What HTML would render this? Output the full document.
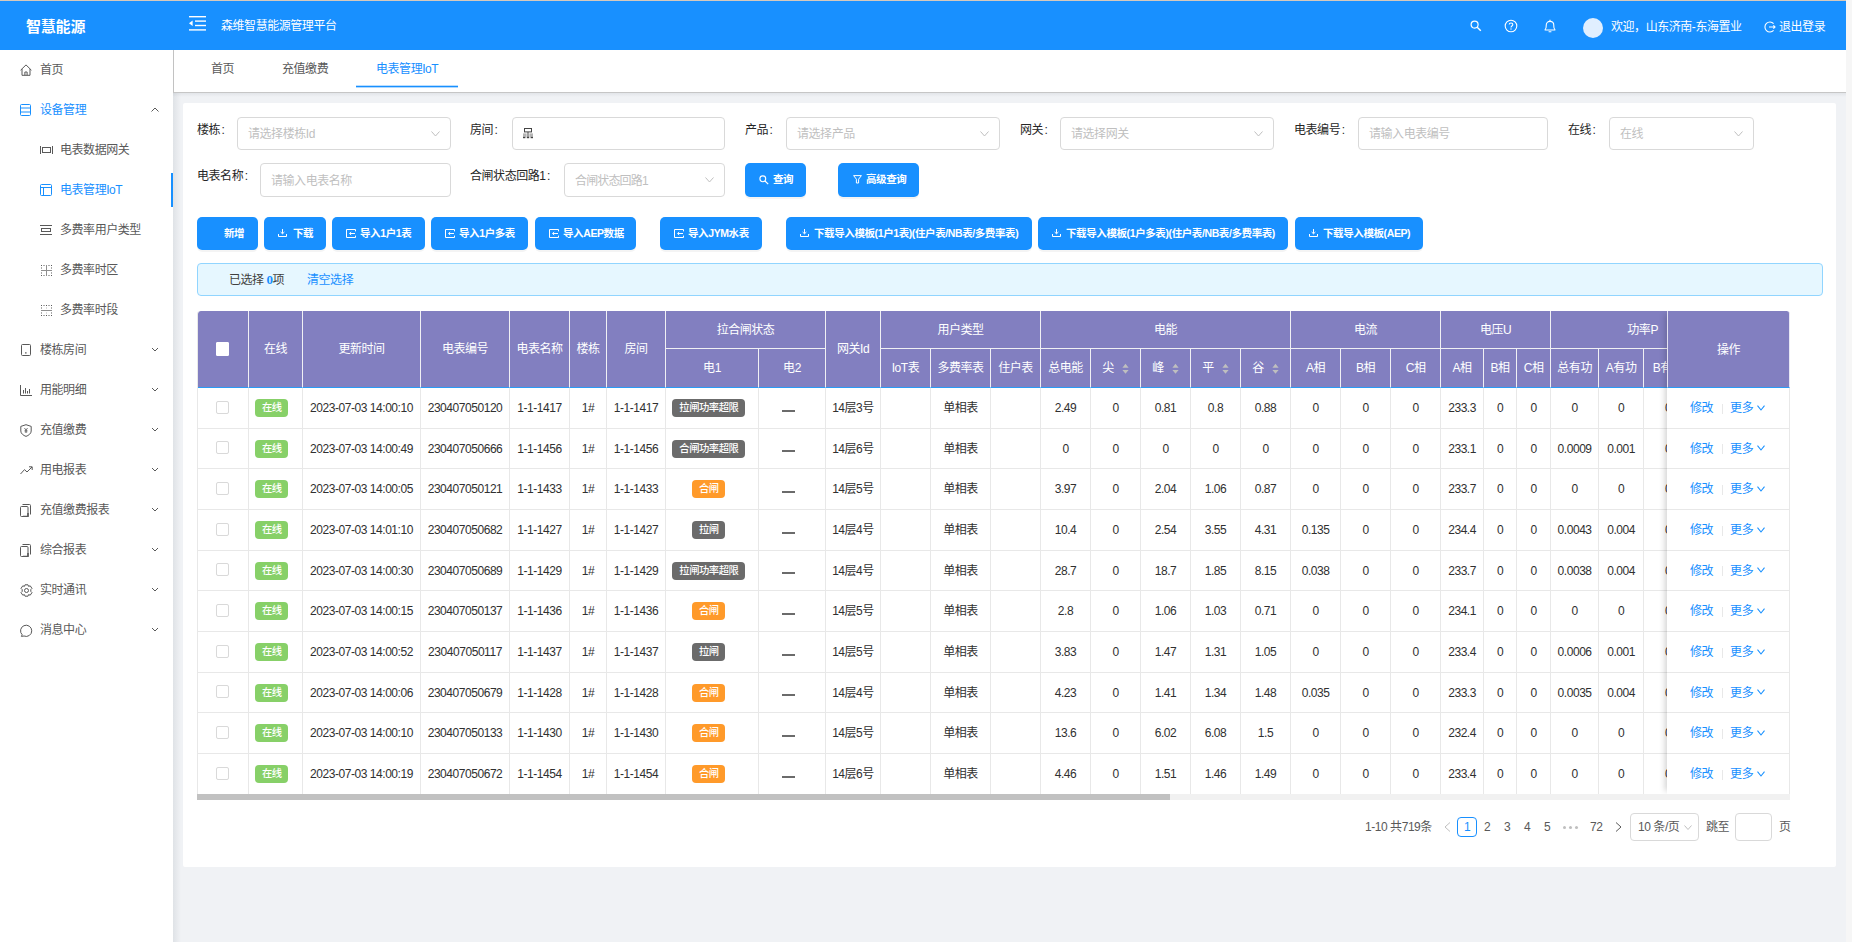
<!DOCTYPE html>
<html lang="zh-CN"><head><meta charset="utf-8"><title>森维智慧能源管理平台</title>
<style>
*{box-sizing:border-box;margin:0;padding:0}
html,body{width:1852px;height:942px;overflow:hidden}
body{position:relative;background:#f0f2f5;font-family:"Liberation Sans","Noto Sans CJK SC",sans-serif;font-size:12px;letter-spacing:-0.45px;color:#555;line-height:1}
.abs{position:absolute}
.t{position:absolute;white-space:nowrap;line-height:16px;height:16px}
#hdr{position:absolute;left:0;top:0;width:1846px;height:50px;background:#1890ff;border-top:1px solid #d5c9bd;color:#fff}
#sbar{position:absolute;left:1846px;top:0;width:6px;height:942px;background:#f6f6f6}
#side{position:absolute;left:0;top:50px;width:173px;height:892px;background:#fff}
#tabs{position:absolute;left:173px;top:50px;width:1673px;height:43px;background:#fff;border-left:1px solid #c2c2c2;border-bottom:1px solid #c6c6c6}
#card{position:absolute;left:183px;top:103px;width:1653px;height:764px;background:#fff;border-radius:2px}
.mi{position:absolute;left:0;width:173px;height:40px;color:#595959}
.mi .t{top:12px}
.mi svg{position:absolute}
.mi.on{color:#1890ff}
.lbl{position:absolute;white-space:nowrap;line-height:16px;color:#262626}
.inp{position:absolute;border:1px solid #d9d9d9;border-radius:4px;background:#fff;height:33px}
.inp .ph{position:absolute;left:10px;top:7.5px;line-height:16px;color:#bfbfbf;white-space:nowrap}
.inp svg{position:absolute}
.btn{position:absolute;height:33px;border-radius:5px;background:#1890ff;color:#fff;font-weight:bold;box-shadow:0 2px 0 rgba(0,0,0,.045);white-space:nowrap;font-size:10.5px;letter-spacing:-0.4px}
.btn .t{top:8px}
.btn svg{position:absolute}
#alert{position:absolute;left:197px;top:263px;width:1626px;height:33px;background:#e6f7ff;border:1px solid #91d5ff;border-radius:4px;color:#404040}
#twrap{position:absolute;left:197px;top:311px;width:1593px;height:483px;overflow:hidden;border-left:1px solid #e8e8e8;border-radius:3px 3px 0 0}
table{border-collapse:separate;border-spacing:0;table-layout:fixed;position:absolute;left:0;top:0}
th,td{border-right:1px solid #e8e8e8;border-bottom:1px solid #e8e8e8;text-align:center;font-weight:normal;white-space:nowrap;overflow:hidden;padding:0;vertical-align:middle;color:#303030}
th{background:#827fc0;color:#fff;border-right:1px solid #f0f0f4;border-bottom:1px solid #f0f0f4}
tr.h2 th,th.rs{border-bottom:1px solid #2a9bf5}
td{background:#fff}
.tag{display:inline-block;height:18px;line-height:18px;border-radius:4px;color:#fff;font-size:10.3px;letter-spacing:-0.45px;padding:0 6.3px 0 7px;vertical-align:middle;margin-right:7px;font-weight:500}
.ds{display:inline-block;width:13px;height:2px;background:#6b6b6b;vertical-align:middle;position:relative;top:2px;margin-right:7px}
.dv{display:inline-block;width:1px;height:10px;background:#e8e8e8;vertical-align:middle;margin:0 7px 0 9px}
.dn{vertical-align:middle;margin-left:4px;position:relative;top:-1px}
#fix td{text-align:left;padding-left:23px}
.g{background:#87d068;margin-right:8px}.k{background:#6b6b6b}.o{background:#ff9a2a}
.cb{display:inline-block;width:13px;height:13px;border:1px solid #d9d9d9;border-radius:2px;background:#fff;vertical-align:middle;position:relative;left:-1px;top:-1px}
.srt{display:inline-block;vertical-align:middle;margin-left:8px}
#fix{position:absolute;left:1469px;top:0;width:123px;height:483px;box-shadow:-5px 0 6px -3px rgba(0,0,0,.18);background:#fff}
#fix table{left:0}
a{color:#1890ff;text-decoration:none}
.pg{position:absolute;white-space:nowrap;line-height:16px;color:#595959}
</style></head>
<body>
<div id="hdr">
<div class="t" style="left:26px;top:17px;font-size:15px;font-weight:bold;letter-spacing:-0.2px;line-height:18px;height:18px">智慧能源</div>
<svg class="abs" style="left:189px;top:15px" width="17" height="15" viewBox="0 0 17 15"><g fill="#fff"><rect x="0" y="0" width="17" height="1.4"/><rect x="6" y="4.4" width="11" height="1.4"/><rect x="6" y="8.8" width="11" height="1.4"/><rect x="0" y="13.2" width="17" height="1.4"/><path d="M0 7.3 L3.6 4.6 L3.6 10 Z"/></g></svg>
<div class="t" style="left:221px;top:17px">森维智慧能源管理平台</div>
<svg class="abs" style="left:1470px;top:19px" width="12" height="12" viewBox="0 0 12 12"><circle cx="4.6" cy="4.6" r="3.5" fill="none" stroke="#fff" stroke-width="1.2"/><path d="M7.2 7.2 L10.8 10.8" stroke="#fff" stroke-width="1.4"/></svg>
<svg class="abs" style="left:1504px;top:18px" width="14" height="14" viewBox="0 0 14 14"><circle cx="7" cy="7" r="5.8" fill="none" stroke="#fff" stroke-width="1.1"/><path d="M5.2 5.6 C5.2 3.4 8.8 3.4 8.8 5.6 C8.8 7 7 7 7 8.4" fill="none" stroke="#fff" stroke-width="1.1"/><rect x="6.4" y="9.4" width="1.2" height="1.2" fill="#fff"/></svg>
<svg class="abs" style="left:1543px;top:18px" width="14" height="15" viewBox="0 0 14 15"><path d="M2.2 11 L2.2 10.4 C3.4 9.6 3.2 8 3.2 6.4 C3.2 3.6 5 2.4 7 2.4 C9 2.4 10.8 3.6 10.8 6.4 C10.8 8 10.6 9.6 11.8 10.4 L11.8 11 Z" fill="none" stroke="#fff" stroke-width="1.1"/><path d="M7 0.8 L7 2.4 M5.6 12.8 L8.4 12.8" stroke="#fff" stroke-width="1.1"/></svg>
<div class="abs" style="left:1583px;top:17px;width:20px;height:20px;border-radius:10px;background:#e0efff"></div>
<div class="t" style="left:1611px;top:18px">欢迎，山东济南-东海置业</div>
<svg class="abs" style="left:1764px;top:20px" width="12" height="12" viewBox="0 0 12 12"><path d="M9.6 2.6 A5 5 0 1 0 9.6 9.4" fill="none" stroke="#fff" stroke-width="1.1"/><path d="M5 6 L11 6 M9.4 4.4 L11 6 L9.4 7.6" fill="none" stroke="#fff" stroke-width="1.1"/></svg>
<div class="t" style="left:1779px;top:18px">退出登录</div>
</div>
<div id="sbar"></div>
<div id="side">
<div class="mi" style="top:0px"><svg style="left:20px;top:14px" width="12" height="12" viewBox="0 0 12 12"><path d="M0.6 6.2 L6 0.9 L11.4 6.2 M2 5 L2 11.3 L10 11.3 L10 5 M4.9 11.3 L4.9 8 L7.1 8 L7.1 11.3" fill="none" stroke="#595959" stroke-width="1"/></svg><div class="t" style="left:40px">首页</div></div>
<div class="mi on" style="top:40px"><svg style="left:20px;top:14px" width="11" height="12" viewBox="0 0 11 12"><rect x="0.5" y="0.5" width="10" height="11" rx="1" fill="none" stroke="#1890ff" stroke-width="1"/><path d="M0.5 4 L10.5 4 M0.5 8 L10.5 8" stroke="#1890ff" stroke-width="1"/></svg><div class="t" style="left:40px">设备管理</div><svg style="left:151px;top:17px" width="8" height="6" viewBox="0 0 8 6"><path d="M0.5 4.5 L4 1 L7.5 4.5" fill="none" stroke="#595959" stroke-width="1"/></svg></div>
<div class="mi" style="top:80px"><svg style="left:40px;top:16px" width="13" height="8" viewBox="0 0 13 8"><path d="M0.5 0 L0.5 8 M12.5 0 L12.5 8" stroke="#595959" stroke-width="1"/><rect x="2.5" y="1.5" width="8" height="5" fill="none" stroke="#595959" stroke-width="1"/></svg><div class="t" style="left:60px">电表数据网关</div></div>
<div class="mi on" style="top:120px"><svg style="left:40px;top:14px" width="12" height="12" viewBox="0 0 12 12"><rect x="0.5" y="0.5" width="11" height="11" rx="1" fill="none" stroke="#1890ff" stroke-width="1"/><path d="M0.5 3.5 L11.5 3.5 M3.5 3.5 L3.5 11.5" stroke="#1890ff" stroke-width="1"/></svg><div class="t" style="left:60px">电表管理IoT</div></div>
<div class="mi" style="top:160px"><svg style="left:40px;top:15px" width="12" height="10" viewBox="0 0 12 10"><path d="M0 0.5 L12 0.5 M0 9.5 L12 9.5" stroke="#595959" stroke-width="1"/><rect x="1.5" y="3.5" width="9" height="3" fill="none" stroke="#595959" stroke-width="1"/></svg><div class="t" style="left:60px">多费率用户类型</div></div>
<div class="mi" style="top:200px"><svg style="left:41px;top:15px" width="11" height="11" viewBox="0 0 11 11"><g fill="#595959"><rect x="0" y="0" width="1" height="1"/><rect x="0" y="10" width="1" height="1"/><rect x="2.5" y="0" width="1" height="1"/><rect x="2.5" y="10" width="1" height="1"/><rect x="5" y="0" width="1" height="1"/><rect x="5" y="10" width="1" height="1"/><rect x="7.5" y="0" width="1" height="1"/><rect x="7.5" y="10" width="1" height="1"/><rect x="10" y="0" width="1" height="1"/><rect x="10" y="10" width="1" height="1"/><rect x="0" y="2.5" width="1" height="1"/><rect x="0" y="5" width="1" height="1"/><rect x="0" y="7.5" width="1" height="1"/><rect x="10" y="2.5" width="1" height="1"/><rect x="10" y="5" width="1" height="1"/><rect x="10" y="7.5" width="1" height="1"/></g><path d="M0 5.5 L11 5.5 M5.5 0 L5.5 11" stroke="#8f8f8f" stroke-width="1"/></svg><div class="t" style="left:60px">多费率时区</div></div>
<div class="mi" style="top:240px"><svg style="left:41px;top:15px" width="11" height="11" viewBox="0 0 11 11"><g fill="#595959"><rect x="0" y="0" width="1" height="1"/><rect x="0" y="10" width="1" height="1"/><rect x="2.5" y="0" width="1" height="1"/><rect x="2.5" y="10" width="1" height="1"/><rect x="5" y="0" width="1" height="1"/><rect x="5" y="10" width="1" height="1"/><rect x="7.5" y="0" width="1" height="1"/><rect x="7.5" y="10" width="1" height="1"/><rect x="10" y="0" width="1" height="1"/><rect x="10" y="10" width="1" height="1"/><rect x="0" y="2.5" width="1" height="1"/><rect x="0" y="5" width="1" height="1"/><rect x="0" y="7.5" width="1" height="1"/><rect x="10" y="2.5" width="1" height="1"/><rect x="10" y="5" width="1" height="1"/><rect x="10" y="7.5" width="1" height="1"/></g><path d="M0 5.5 L11 5.5" stroke="#8f8f8f" stroke-width="1"/><rect x="5" y="2.5" width="1" height="1" fill="#bbb"/><rect x="5" y="7.5" width="1" height="1" fill="#bbb"/></svg><div class="t" style="left:60px">多费率时段</div></div>
<div class="mi" style="top:280px"><svg style="left:21px;top:14px" width="10" height="12" viewBox="0 0 10 12"><rect x="0.5" y="0.5" width="9" height="11" rx="1" fill="none" stroke="#595959" stroke-width="1"/><rect x="4" y="8.3" width="1.6" height="1.2" fill="#595959"/></svg><div class="t" style="left:40px">楼栋房间</div><svg style="left:151px;top:17px" width="8" height="6" viewBox="0 0 8 6"><path d="M1 1 L4 4 L7 1" fill="none" stroke="#595959" stroke-width="1"/></svg></div>
<div class="mi" style="top:320px"><svg style="left:20px;top:15px" width="12" height="11" viewBox="0 0 12 11"><path d="M0.5 0 L0.5 10.5 L12 10.5 M3.5 5 L3.5 8.5 M5.5 3 L5.5 8.5 M7.5 6 L7.5 8.5 M9.5 4 L9.5 8.5" fill="none" stroke="#595959" stroke-width="1"/></svg><div class="t" style="left:40px">用能明细</div><svg style="left:151px;top:17px" width="8" height="6" viewBox="0 0 8 6"><path d="M1 1 L4 4 L7 1" fill="none" stroke="#595959" stroke-width="1"/></svg></div>
<div class="mi" style="top:360px"><svg style="left:20px;top:14px" width="12" height="13" viewBox="0 0 12 13"><path d="M6 0.7 L11.2 2.4 L11.2 7 C11.2 9.6 8.6 11.4 6 12.4 C3.4 11.4 0.8 9.6 0.8 7 L0.8 2.4 Z" fill="none" stroke="#595959" stroke-width="1"/><path d="M4.4 4 L6 6 L7.6 4 M6 6 L6 9 M4.6 6.4 L7.4 6.4 M4.6 7.8 L7.4 7.8" fill="none" stroke="#595959" stroke-width=".8"/></svg><div class="t" style="left:40px">充值缴费</div><svg style="left:151px;top:17px" width="8" height="6" viewBox="0 0 8 6"><path d="M1 1 L4 4 L7 1" fill="none" stroke="#595959" stroke-width="1"/></svg></div>
<div class="mi" style="top:400px"><svg style="left:20px;top:16px" width="13" height="9" viewBox="0 0 13 9"><path d="M0.5 8 L4.5 3.6 L7 6 L12 1 M9 0.8 L12.2 0.8 L12.2 4" fill="none" stroke="#595959" stroke-width="1"/></svg><div class="t" style="left:40px">用电报表</div><svg style="left:151px;top:17px" width="8" height="6" viewBox="0 0 8 6"><path d="M1 1 L4 4 L7 1" fill="none" stroke="#595959" stroke-width="1"/></svg></div>
<div class="mi" style="top:440px"><svg style="left:20px;top:14px" width="11" height="13" viewBox="0 0 11 13"><rect x="0.5" y="2.5" width="7.5" height="10" rx="1" fill="none" stroke="#595959" stroke-width="1"/><path d="M2.5 0.5 L9.5 0.5 Q10.5 0.5 10.5 1.5 L10.5 10.5" fill="none" stroke="#595959" stroke-width="1"/><path d="M3 12.5 L8 12.5 L8 9" stroke="#595959" stroke-width="1.6" fill="none"/></svg><div class="t" style="left:40px">充值缴费报表</div><svg style="left:151px;top:17px" width="8" height="6" viewBox="0 0 8 6"><path d="M1 1 L4 4 L7 1" fill="none" stroke="#595959" stroke-width="1"/></svg></div>
<div class="mi" style="top:480px"><svg style="left:20px;top:14px" width="11" height="13" viewBox="0 0 11 13"><rect x="0.5" y="2.5" width="7.5" height="10" rx="1" fill="none" stroke="#595959" stroke-width="1"/><path d="M2.5 0.5 L9.5 0.5 Q10.5 0.5 10.5 1.5 L10.5 10.5" fill="none" stroke="#595959" stroke-width="1"/><path d="M3 12.5 L8 12.5 L8 9" stroke="#595959" stroke-width="1.6" fill="none"/></svg><div class="t" style="left:40px">综合报表</div><svg style="left:151px;top:17px" width="8" height="6" viewBox="0 0 8 6"><path d="M1 1 L4 4 L7 1" fill="none" stroke="#595959" stroke-width="1"/></svg></div>
<div class="mi" style="top:520px"><svg style="left:20px;top:14px" width="13" height="13" viewBox="0 0 13 13"><path d="M5 0.8 L8 0.8 L8.6 2.4 L10.2 1.8 L12 4.4 L10.8 5.6 L10.8 7.4 L12 8.6 L10.2 11.2 L8.6 10.6 L8 12.2 L5 12.2 L4.4 10.6 L2.8 11.2 L1 8.6 L2.2 7.4 L2.2 5.6 L1 4.4 L2.8 1.8 L4.4 2.4 Z" fill="none" stroke="#595959" stroke-width="1" stroke-linejoin="round"/><circle cx="6.5" cy="6.5" r="2" fill="none" stroke="#595959" stroke-width="1"/></svg><div class="t" style="left:40px">实时通讯</div><svg style="left:151px;top:17px" width="8" height="6" viewBox="0 0 8 6"><path d="M1 1 L4 4 L7 1" fill="none" stroke="#595959" stroke-width="1"/></svg></div>
<div class="mi" style="top:560px"><svg style="left:20px;top:14px" width="13" height="13" viewBox="0 0 13 13"><path d="M2.2 10.8 A5.6 5.6 0 1 1 4 12 L1.4 12.4 Z" fill="none" stroke="#595959" stroke-width="1" stroke-linejoin="round"/></svg><div class="t" style="left:40px">消息中心</div><svg style="left:151px;top:17px" width="8" height="6" viewBox="0 0 8 6"><path d="M1 1 L4 4 L7 1" fill="none" stroke="#595959" stroke-width="1"/></svg></div>
<div class="abs" style="left:171px;top:123px;width:2px;height:34px;background:#1890ff"></div>
</div>
<div id="tabs">
<div class="t" style="left:37px;top:11px;color:#595959">首页</div>
<div class="t" style="left:108px;top:11px;color:#595959">充值缴费</div>
<div class="t" style="left:202px;top:11px;color:#1890ff">电表管理IoT</div>
<div class="abs" style="left:182px;top:36px;width:102px;height:1px;background:#1890ff;box-shadow:0 1px 0 rgba(24,144,255,.35),0 -1px 0 rgba(24,144,255,.3)"></div>
</div>
<div class="abs" style="left:173px;top:93px;width:8px;height:849px;background:linear-gradient(to right,rgba(0,21,41,.07),rgba(0,21,41,0))"></div>
<div class="abs" style="left:173px;top:93px;width:1673px;height:4px;background:linear-gradient(to bottom,rgba(0,21,41,.06),rgba(0,21,41,0))"></div>
<div id="card"></div>
<div class="lbl" style="left:197px;top:122px">楼栋<span style="margin-left:1.5px">:</span></div>
<div class="inp" style="left:237px;top:117px;width:214px;height:33px"><div class="ph">请选择楼栋Id</div><svg style="right:10px;top:13px" width="9" height="6" viewBox="0 0 9 6"><path d="M0.5 0.5 L4.5 5 L8.5 0.5" fill="none" stroke="#bfbfbf" stroke-width="1"/></svg></div>
<div class="lbl" style="left:470px;top:122px">房间<span style="margin-left:1.5px">:</span></div>
<div class="inp" style="left:512px;top:117px;width:213px;height:33px"><svg style="left:9px;top:10px" width="12" height="11" viewBox="0 0 12 11"><rect x="2.5" y="0.5" width="7" height="3.4" fill="none" stroke="#444" stroke-width="1"/><rect x="5.5" y="4" width="1" height="5.6" fill="#444"/><rect x="1" y="5.4" width="3.6" height="3.4" fill="#b4b4b4"/><rect x="7.4" y="5.4" width="3.6" height="3.4" fill="#b4b4b4"/><rect x="1" y="8.8" width="2.4" height="1.4" fill="#444"/><rect x="4.8" y="8.8" width="2.4" height="1.4" fill="#444"/><rect x="8.6" y="8.8" width="2.4" height="1.4" fill="#444"/></svg></div>
<div class="lbl" style="left:745px;top:122px">产品<span style="margin-left:1.5px">:</span></div>
<div class="inp" style="left:786px;top:117px;width:214px;height:33px"><div class="ph">请选择产品</div><svg style="right:10px;top:13px" width="9" height="6" viewBox="0 0 9 6"><path d="M0.5 0.5 L4.5 5 L8.5 0.5" fill="none" stroke="#bfbfbf" stroke-width="1"/></svg></div>
<div class="lbl" style="left:1020px;top:122px">网关<span style="margin-left:1.5px">:</span></div>
<div class="inp" style="left:1060px;top:117px;width:214px;height:33px"><div class="ph">请选择网关</div><svg style="right:10px;top:13px" width="9" height="6" viewBox="0 0 9 6"><path d="M0.5 0.5 L4.5 5 L8.5 0.5" fill="none" stroke="#bfbfbf" stroke-width="1"/></svg></div>
<div class="lbl" style="left:1294px;top:122px">电表编号<span style="margin-left:1.5px">:</span></div>
<div class="inp" style="left:1358px;top:117px;width:190px;height:33px"><div class="ph">请输入电表编号</div></div>
<div class="lbl" style="left:1568px;top:122px">在线<span style="margin-left:1.5px">:</span></div>
<div class="inp" style="left:1609px;top:117px;width:145px;height:33px"><div class="ph">在线</div><svg style="right:10px;top:13px" width="9" height="6" viewBox="0 0 9 6"><path d="M0.5 0.5 L4.5 5 L8.5 0.5" fill="none" stroke="#bfbfbf" stroke-width="1"/></svg></div>
<div class="lbl" style="left:197px;top:168px">电表名称<span style="margin-left:1.5px">:</span></div>
<div class="inp" style="left:260px;top:163px;width:191px;height:34px"><div class="ph" style="top:9px">请输入电表名称</div></div>
<div class="lbl" style="left:470px;top:168px">合闸状态回路1<span style="margin-left:1.5px">:</span></div>
<div class="inp" style="left:564px;top:163px;width:161px;height:34px"><div class="ph" style="top:9px"><span style="letter-spacing:-0.85px">合闸状态回路1</span></div><svg style="right:10px;top:13px" width="9" height="6" viewBox="0 0 9 6"><path d="M0.5 0.5 L4.5 5 L8.5 0.5" fill="none" stroke="#bfbfbf" stroke-width="1"/></svg></div>
<div class="btn" style="left:745px;top:163px;width:61px;height:34px"><svg style="left:14px;top:12px" width="10" height="10" viewBox="0 0 10 10"><circle cx="3.8" cy="3.8" r="2.9" fill="none" stroke="#fff" stroke-width="1.1"/><path d="M6 6 L9.2 9.2" stroke="#fff" stroke-width="1.2"/></svg><div class="t" style="left:28px">查询</div></div>
<div class="btn" style="left:838px;top:163px;width:81px;height:34px"><svg style="left:15px;top:12px" width="9" height="9" viewBox="0 0 9 9"><path d="M0.6 0.6 L8.4 0.6 L5.6 4.2 L5.6 8 L3.4 8 L3.4 4.2 Z" fill="none" stroke="#fff" stroke-width="1" stroke-linejoin="round"/></svg><div class="t" style="left:28px">高级查询</div></div>
<div class="btn" style="left:197px;top:217px;width:61px;height:33px"><div class="t" style="left:27px">新增</div></div>
<div class="btn" style="left:264px;top:217px;width:62px;height:33px"><svg style="left:14px;top:12px" width="9" height="8" viewBox="0 0 9 8"><path d="M4.5 0 L4.5 4.6 M2.6 3 L4.5 4.8 L6.4 3 M0.5 5 L0.5 7.5 L8.5 7.5 L8.5 5" fill="none" stroke="#fff" stroke-width="1"/></svg><div class="t" style="left:29px">下载</div></div>
<div class="btn" style="left:332px;top:217px;width:93px;height:33px"><svg style="left:14px;top:12px" width="10" height="9" viewBox="0 0 10 9"><path d="M9.5 2.4 L9.5 0.5 L0.5 0.5 L0.5 8.5 L9.5 8.5 L9.5 6.6 M3.6 4.5 L9 4.5 M5.2 3 L3.6 4.5 L5.2 6" fill="none" stroke="#fff" stroke-width="1"/></svg><div class="t" style="left:28px">导入1户1表</div></div>
<div class="btn" style="left:431px;top:217px;width:97px;height:33px"><svg style="left:14px;top:12px" width="10" height="9" viewBox="0 0 10 9"><path d="M9.5 2.4 L9.5 0.5 L0.5 0.5 L0.5 8.5 L9.5 8.5 L9.5 6.6 M3.6 4.5 L9 4.5 M5.2 3 L3.6 4.5 L5.2 6" fill="none" stroke="#fff" stroke-width="1"/></svg><div class="t" style="left:28px">导入1户多表</div></div>
<div class="btn" style="left:535px;top:217px;width:101px;height:33px"><svg style="left:14px;top:12px" width="10" height="9" viewBox="0 0 10 9"><path d="M9.5 2.4 L9.5 0.5 L0.5 0.5 L0.5 8.5 L9.5 8.5 L9.5 6.6 M3.6 4.5 L9 4.5 M5.2 3 L3.6 4.5 L5.2 6" fill="none" stroke="#fff" stroke-width="1"/></svg><div class="t" style="left:28px">导入AEP数据</div></div>
<div class="btn" style="left:660px;top:217px;width:102px;height:33px"><svg style="left:14px;top:12px" width="10" height="9" viewBox="0 0 10 9"><path d="M9.5 2.4 L9.5 0.5 L0.5 0.5 L0.5 8.5 L9.5 8.5 L9.5 6.6 M3.6 4.5 L9 4.5 M5.2 3 L3.6 4.5 L5.2 6" fill="none" stroke="#fff" stroke-width="1"/></svg><div class="t" style="left:28px">导入JYM水表</div></div>
<div class="btn" style="left:786px;top:217px;width:246px;height:33px"><svg style="left:14px;top:12px" width="9" height="8" viewBox="0 0 9 8"><path d="M4.5 0 L4.5 4.6 M2.6 3 L4.5 4.8 L6.4 3 M0.5 5 L0.5 7.5 L8.5 7.5 L8.5 5" fill="none" stroke="#fff" stroke-width="1"/></svg><div class="t" style="left:28px">下载导入模板(1户1表)(住户表/NB表/多费率表)</div></div>
<div class="btn" style="left:1038px;top:217px;width:250px;height:33px"><svg style="left:14px;top:12px" width="9" height="8" viewBox="0 0 9 8"><path d="M4.5 0 L4.5 4.6 M2.6 3 L4.5 4.8 L6.4 3 M0.5 5 L0.5 7.5 L8.5 7.5 L8.5 5" fill="none" stroke="#fff" stroke-width="1"/></svg><div class="t" style="left:28px">下载导入模板(1户多表)(住户表/NB表/多费率表)</div></div>
<div class="btn" style="left:1295px;top:217px;width:128px;height:33px"><svg style="left:14px;top:12px" width="9" height="8" viewBox="0 0 9 8"><path d="M4.5 0 L4.5 4.6 M2.6 3 L4.5 4.8 L6.4 3 M0.5 5 L0.5 7.5 L8.5 7.5 L8.5 5" fill="none" stroke="#fff" stroke-width="1"/></svg><div class="t" style="left:28px">下载导入模板(AEP)</div></div>
<div id="alert"><div class="t" style="left:31px;top:8px">已选择 <b style="color:#1890ff;font-family:'Liberation Serif',serif;font-size:13px">0</b>项</div><div class="t" style="left:109px;top:8px;color:#1890ff">清空选择</div></div>
<div id="twrap">
<table style="width:1586px"><colgroup><col style="width:51px"><col style="width:54px"><col style="width:118px"><col style="width:89px"><col style="width:60px"><col style="width:37px"><col style="width:59px"><col style="width:93px"><col style="width:67px"><col style="width:55px"><col style="width:50px"><col style="width:60px"><col style="width:50px"><col style="width:50px"><col style="width:50px"><col style="width:50px"><col style="width:50px"><col style="width:50px"><col style="width:50px"><col style="width:50px"><col style="width:50px"><col style="width:43px"><col style="width:33px"><col style="width:34px"><col style="width:48px"><col style="width:45px"><col style="width:49px"><col style="width:42px"><col style="width:49px"></colgroup>
<thead>
<tr style="height:38px"><th rowspan="2" class="rs" style="border-top-left-radius:3px"><span class="cb" style="border-color:#fff;height:14px;top:0;border-radius:1px"></span></th><th rowspan="2" class="rs">在线</th><th rowspan="2" class="rs">更新时间</th><th rowspan="2" class="rs">电表编号</th><th rowspan="2" class="rs">电表名称</th><th rowspan="2" class="rs">楼栋</th><th rowspan="2" class="rs">房间</th><th colspan="2">拉合闸状态</th><th rowspan="2" class="rs">网关Id</th><th colspan="3">用户类型</th><th colspan="5">电能</th><th colspan="3">电流</th><th colspan="3">电压U</th><th colspan="4">功率P</th><th rowspan="2" class="rs">备注</th></tr>
<tr class="h2" style="height:39px"><th>电1</th><th>电2</th><th>IoT表</th><th>多费率表</th><th>住户表</th><th>总电能</th><th>尖<svg class="srt" width="7" height="11" viewBox="0 0 7 11"><path d="M3.5 0.8 L6.6 4.8 L0.4 4.8 Z M3.5 10.8 L6.6 6.9 L0.4 6.9 Z" fill="#bfbfbf"/></svg></th><th>峰<svg class="srt" width="7" height="11" viewBox="0 0 7 11"><path d="M3.5 0.8 L6.6 4.8 L0.4 4.8 Z M3.5 10.8 L6.6 6.9 L0.4 6.9 Z" fill="#bfbfbf"/></svg></th><th>平<svg class="srt" width="7" height="11" viewBox="0 0 7 11"><path d="M3.5 0.8 L6.6 4.8 L0.4 4.8 Z M3.5 10.8 L6.6 6.9 L0.4 6.9 Z" fill="#bfbfbf"/></svg></th><th>谷<svg class="srt" width="7" height="11" viewBox="0 0 7 11"><path d="M3.5 0.8 L6.6 4.8 L0.4 4.8 Z M3.5 10.8 L6.6 6.9 L0.4 6.9 Z" fill="#bfbfbf"/></svg></th><th>A相</th><th>B相</th><th>C相</th><th>A相</th><th>B相</th><th>C相</th><th>总有功</th><th>A有功</th><th>B有功</th><th>C有功</th></tr>
</thead>
<tbody>
<tr style="height:41px"><td><span class="cb"></span></td><td><span class="tag g">在线</span></td><td>2023-07-03 14:00:10</td><td>230407050120</td><td>1-1-1417</td><td>1#</td><td>1-1-1417</td><td><span class="tag k">拉闸功率超限</span></td><td><span class="ds"></span></td><td>14层3号</td><td></td><td>单相表</td><td></td><td>2.49</td><td>0</td><td>0.81</td><td>0.8</td><td>0.88</td><td>0</td><td>0</td><td>0</td><td>233.3</td><td>0</td><td>0</td><td>0</td><td>0</td><td>0</td><td>0</td><td>0</td></tr>
<tr style="height:40px"><td><span class="cb"></span></td><td><span class="tag g">在线</span></td><td>2023-07-03 14:00:49</td><td>230407050666</td><td>1-1-1456</td><td>1#</td><td>1-1-1456</td><td><span class="tag k">合闸功率超限</span></td><td><span class="ds"></span></td><td>14层6号</td><td></td><td>单相表</td><td></td><td>0</td><td>0</td><td>0</td><td>0</td><td>0</td><td>0</td><td>0</td><td>0</td><td>233.1</td><td>0</td><td>0</td><td>0.0009</td><td>0.001</td><td>0</td><td>0</td><td>0</td></tr>
<tr style="height:41px"><td><span class="cb"></span></td><td><span class="tag g">在线</span></td><td>2023-07-03 14:00:05</td><td>230407050121</td><td>1-1-1433</td><td>1#</td><td>1-1-1433</td><td><span class="tag o">合闸</span></td><td><span class="ds"></span></td><td>14层5号</td><td></td><td>单相表</td><td></td><td>3.97</td><td>0</td><td>2.04</td><td>1.06</td><td>0.87</td><td>0</td><td>0</td><td>0</td><td>233.7</td><td>0</td><td>0</td><td>0</td><td>0</td><td>0</td><td>0</td><td>0</td></tr>
<tr style="height:41px"><td><span class="cb"></span></td><td><span class="tag g">在线</span></td><td>2023-07-03 14:01:10</td><td>230407050682</td><td>1-1-1427</td><td>1#</td><td>1-1-1427</td><td><span class="tag k">拉闸</span></td><td><span class="ds"></span></td><td>14层4号</td><td></td><td>单相表</td><td></td><td>10.4</td><td>0</td><td>2.54</td><td>3.55</td><td>4.31</td><td>0.135</td><td>0</td><td>0</td><td>234.4</td><td>0</td><td>0</td><td>0.0043</td><td>0.004</td><td>0</td><td>0</td><td>0</td></tr>
<tr style="height:40px"><td><span class="cb"></span></td><td><span class="tag g">在线</span></td><td>2023-07-03 14:00:30</td><td>230407050689</td><td>1-1-1429</td><td>1#</td><td>1-1-1429</td><td><span class="tag k">拉闸功率超限</span></td><td><span class="ds"></span></td><td>14层4号</td><td></td><td>单相表</td><td></td><td>28.7</td><td>0</td><td>18.7</td><td>1.85</td><td>8.15</td><td>0.038</td><td>0</td><td>0</td><td>233.7</td><td>0</td><td>0</td><td>0.0038</td><td>0.004</td><td>0</td><td>0</td><td>0</td></tr>
<tr style="height:41px"><td><span class="cb"></span></td><td><span class="tag g">在线</span></td><td>2023-07-03 14:00:15</td><td>230407050137</td><td>1-1-1436</td><td>1#</td><td>1-1-1436</td><td><span class="tag o">合闸</span></td><td><span class="ds"></span></td><td>14层5号</td><td></td><td>单相表</td><td></td><td>2.8</td><td>0</td><td>1.06</td><td>1.03</td><td>0.71</td><td>0</td><td>0</td><td>0</td><td>234.1</td><td>0</td><td>0</td><td>0</td><td>0</td><td>0</td><td>0</td><td>0</td></tr>
<tr style="height:41px"><td><span class="cb"></span></td><td><span class="tag g">在线</span></td><td>2023-07-03 14:00:52</td><td>230407050117</td><td>1-1-1437</td><td>1#</td><td>1-1-1437</td><td><span class="tag k">拉闸</span></td><td><span class="ds"></span></td><td>14层5号</td><td></td><td>单相表</td><td></td><td>3.83</td><td>0</td><td>1.47</td><td>1.31</td><td>1.05</td><td>0</td><td>0</td><td>0</td><td>233.4</td><td>0</td><td>0</td><td>0.0006</td><td>0.001</td><td>0</td><td>0</td><td>0</td></tr>
<tr style="height:40px"><td><span class="cb"></span></td><td><span class="tag g">在线</span></td><td>2023-07-03 14:00:06</td><td>230407050679</td><td>1-1-1428</td><td>1#</td><td>1-1-1428</td><td><span class="tag o">合闸</span></td><td><span class="ds"></span></td><td>14层4号</td><td></td><td>单相表</td><td></td><td>4.23</td><td>0</td><td>1.41</td><td>1.34</td><td>1.48</td><td>0.035</td><td>0</td><td>0</td><td>233.3</td><td>0</td><td>0</td><td>0.0035</td><td>0.004</td><td>0</td><td>0</td><td>0</td></tr>
<tr style="height:41px"><td><span class="cb"></span></td><td><span class="tag g">在线</span></td><td>2023-07-03 14:00:10</td><td>230407050133</td><td>1-1-1430</td><td>1#</td><td>1-1-1430</td><td><span class="tag o">合闸</span></td><td><span class="ds"></span></td><td>14层5号</td><td></td><td>单相表</td><td></td><td>13.6</td><td>0</td><td>6.02</td><td>6.08</td><td>1.5</td><td>0</td><td>0</td><td>0</td><td>232.4</td><td>0</td><td>0</td><td>0</td><td>0</td><td>0</td><td>0</td><td>0</td></tr>
<tr style="height:41px"><td><span class="cb"></span></td><td><span class="tag g">在线</span></td><td>2023-07-03 14:00:19</td><td>230407050672</td><td>1-1-1454</td><td>1#</td><td>1-1-1454</td><td><span class="tag o">合闸</span></td><td><span class="ds"></span></td><td>14层6号</td><td></td><td>单相表</td><td></td><td>4.46</td><td>0</td><td>1.51</td><td>1.46</td><td>1.49</td><td>0</td><td>0</td><td>0</td><td>233.4</td><td>0</td><td>0</td><td>0</td><td>0</td><td>0</td><td>0</td><td>0</td></tr>
</tbody></table>
<div id="fix"><table style="width:123px"><thead><tr style="height:77px"><th class="rs" style="border-top-right-radius:3px;border-right-color:#e8e8f4;border-left:1px solid #e4e3f2;padding:1px 0 0 0">操作</th></tr></thead><tbody>
<tr style="height:41px"><td><a>修改</a><span class="dv"></span><a>更多</a><svg class="dn" width="8" height="6" viewBox="0 0 8 6"><path d="M0.5 0.6 L4 5 L7.5 0.6" fill="none" stroke="#1890ff" stroke-width="1.05"/></svg></td></tr>
<tr style="height:40px"><td><a>修改</a><span class="dv"></span><a>更多</a><svg class="dn" width="8" height="6" viewBox="0 0 8 6"><path d="M0.5 0.6 L4 5 L7.5 0.6" fill="none" stroke="#1890ff" stroke-width="1.05"/></svg></td></tr>
<tr style="height:41px"><td><a>修改</a><span class="dv"></span><a>更多</a><svg class="dn" width="8" height="6" viewBox="0 0 8 6"><path d="M0.5 0.6 L4 5 L7.5 0.6" fill="none" stroke="#1890ff" stroke-width="1.05"/></svg></td></tr>
<tr style="height:41px"><td><a>修改</a><span class="dv"></span><a>更多</a><svg class="dn" width="8" height="6" viewBox="0 0 8 6"><path d="M0.5 0.6 L4 5 L7.5 0.6" fill="none" stroke="#1890ff" stroke-width="1.05"/></svg></td></tr>
<tr style="height:40px"><td><a>修改</a><span class="dv"></span><a>更多</a><svg class="dn" width="8" height="6" viewBox="0 0 8 6"><path d="M0.5 0.6 L4 5 L7.5 0.6" fill="none" stroke="#1890ff" stroke-width="1.05"/></svg></td></tr>
<tr style="height:41px"><td><a>修改</a><span class="dv"></span><a>更多</a><svg class="dn" width="8" height="6" viewBox="0 0 8 6"><path d="M0.5 0.6 L4 5 L7.5 0.6" fill="none" stroke="#1890ff" stroke-width="1.05"/></svg></td></tr>
<tr style="height:41px"><td><a>修改</a><span class="dv"></span><a>更多</a><svg class="dn" width="8" height="6" viewBox="0 0 8 6"><path d="M0.5 0.6 L4 5 L7.5 0.6" fill="none" stroke="#1890ff" stroke-width="1.05"/></svg></td></tr>
<tr style="height:40px"><td><a>修改</a><span class="dv"></span><a>更多</a><svg class="dn" width="8" height="6" viewBox="0 0 8 6"><path d="M0.5 0.6 L4 5 L7.5 0.6" fill="none" stroke="#1890ff" stroke-width="1.05"/></svg></td></tr>
<tr style="height:41px"><td><a>修改</a><span class="dv"></span><a>更多</a><svg class="dn" width="8" height="6" viewBox="0 0 8 6"><path d="M0.5 0.6 L4 5 L7.5 0.6" fill="none" stroke="#1890ff" stroke-width="1.05"/></svg></td></tr>
<tr style="height:41px"><td><a>修改</a><span class="dv"></span><a>更多</a><svg class="dn" width="8" height="6" viewBox="0 0 8 6"><path d="M0.5 0.6 L4 5 L7.5 0.6" fill="none" stroke="#1890ff" stroke-width="1.05"/></svg></td></tr>
</tbody></table></div>
</div>
<div class="abs" style="left:197px;top:794px;width:1593px;height:6px;background:#f1f1f1"></div>
<div class="abs" style="left:197px;top:794px;width:973px;height:6px;background:#c1c1c1"></div>
<div class="pg" style="left:1365px;top:819px;">1-10 共719条</div>
<svg class="abs" style="left:1444px;top:822px" width="7" height="10" viewBox="0 0 7 10"><path d="M6 0.5 L1 5 L6 9.5" fill="none" stroke="#bfbfbf" stroke-width="1"/></svg>
<div class="abs" style="left:1457px;top:817px;width:20px;height:20px;border:1px solid #1890ff;border-radius:4px;color:#1890ff;text-align:center;line-height:18px">1</div>
<div class="pg" style="left:1484px;top:819px;">2</div>
<div class="pg" style="left:1504px;top:819px;">3</div>
<div class="pg" style="left:1524px;top:819px;">4</div>
<div class="pg" style="left:1544px;top:819px;">5</div>
<div class="pg" style="left:1590px;top:819px;">72</div>
<div class="abs" style="left:1563px;top:826px;width:3px;height:3px;border-radius:2px;background:#bfbfbf;box-shadow:6px 0 0 #bfbfbf,12px 0 0 #bfbfbf"></div>
<svg class="abs" style="left:1615px;top:822px" width="7" height="10" viewBox="0 0 7 10"><path d="M1 0.5 L6 5 L1 9.5" fill="none" stroke="#595959" stroke-width="1"/></svg>
<div class="inp" style="left:1630px;top:813px;width:69px;height:28px"><div class="ph" style="left:7px;top:5px;color:#595959">10 条/页</div><svg style="right:6px;top:11px" width="8" height="6" viewBox="0 0 8 6"><path d="M0.5 0.5 L4 4.5 L7.5 0.5" fill="none" stroke="#bfbfbf" stroke-width="1"/></svg></div>
<div class="pg" style="left:1706px;top:819px;">跳至</div>
<div class="inp" style="left:1735px;top:813px;width:37px;height:28px"></div>
<div class="pg" style="left:1779px;top:819px;">页</div>
</body></html>
